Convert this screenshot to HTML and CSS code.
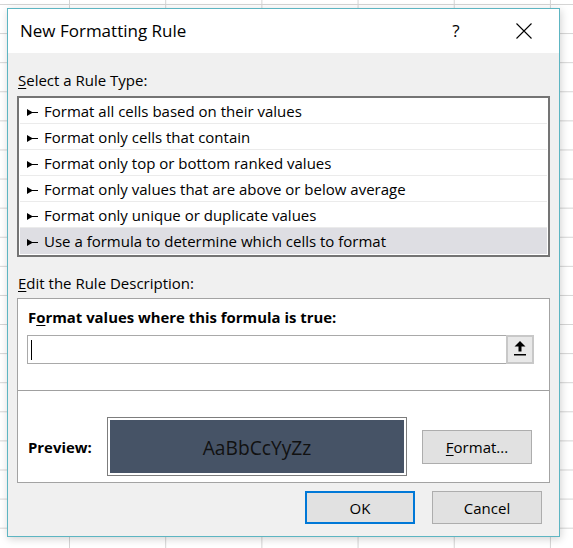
FILE: index.html
```html
<!DOCTYPE html>
<html lang="en">
<head>
<meta charset="utf-8">
<title>New Formatting Rule</title>
<link rel="stylesheet" href="styles.css">
</head>
<body>
<div class="dialog">
  <div class="titlebar">
    <span class="title">New Formatting Rule</span>
    <span class="help">?</span>
    <span class="close">
      <svg width="16" height="16" viewBox="0 0 16 16"><path d="M0.5 0.5 L15.5 15.5 M15.5 0.5 L0.5 15.5" stroke="#000" stroke-width="1.1" fill="none"/></svg>
    </span>
  </div>
  <div class="content">
    <div class="label"><u>S</u>elect a Rule Type:</div>
    <div class="list">
      <div class="row"><svg class="bullet" width="11" height="7" viewBox="0 0 11 7"><path d="M0 0 L6 3.5 L0 7 Z" fill="#000"/><path d="M5 3.5 H11" stroke="#000" stroke-width="1"/></svg><span class="row-text">Format all cells based on their values</span></div>
      <div class="row"><svg class="bullet" width="11" height="7" viewBox="0 0 11 7"><path d="M0 0 L6 3.5 L0 7 Z" fill="#000"/><path d="M5 3.5 H11" stroke="#000" stroke-width="1"/></svg><span class="row-text">Format only cells that contain</span></div>
      <div class="row"><svg class="bullet" width="11" height="7" viewBox="0 0 11 7"><path d="M0 0 L6 3.5 L0 7 Z" fill="#000"/><path d="M5 3.5 H11" stroke="#000" stroke-width="1"/></svg><span class="row-text">Format only top or bottom ranked values</span></div>
      <div class="row"><svg class="bullet" width="11" height="7" viewBox="0 0 11 7"><path d="M0 0 L6 3.5 L0 7 Z" fill="#000"/><path d="M5 3.5 H11" stroke="#000" stroke-width="1"/></svg><span class="row-text">Format only values that are above or below average</span></div>
      <div class="row"><svg class="bullet" width="11" height="7" viewBox="0 0 11 7"><path d="M0 0 L6 3.5 L0 7 Z" fill="#000"/><path d="M5 3.5 H11" stroke="#000" stroke-width="1"/></svg><span class="row-text">Format only unique or duplicate values</span></div>
      <div class="row selected"><svg class="bullet" width="11" height="7" viewBox="0 0 11 7"><path d="M0 0 L6 3.5 L0 7 Z" fill="#000"/><path d="M5 3.5 H11" stroke="#000" stroke-width="1"/></svg><span class="row-text">Use a formula to determine which cells to format</span></div>
    </div>
    <div class="label second"><u>E</u>dit the Rule Description:</div>
    <div class="desc">
      <div class="desc-top">
        <div class="bold-label">F<u>o</u>rmat values where this formula is true:</div>
        <div class="formula">
          <div class="input"><span class="caret"></span></div>
          <div class="refbtn">
            <svg width="24" height="25" viewBox="0 0 24 25"><path d="M12 4 L17.5 9.5 H13.5 V14.5 H10.5 V9.5 H6.5 Z" fill="#000"/><rect x="6" y="17" width="12" height="1.5" fill="#000"/></svg>
          </div>
        </div>
      </div>
      <div class="desc-bottom">
        <div class="preview-label">Preview:</div>
        <div class="preview"><div class="preview-fill">AaBbCcYyZz</div></div>
        <button class="btn format"><u>F</u>ormat...</button>
      </div>
    </div>
    <div class="actions">
      <button class="btn ok">OK</button>
      <button class="btn cancel">Cancel</button>
    </div>
  </div>
</div>
</body>
</html>
```
FILE: styles.css
```css
html, body {
  margin: 0;
  padding: 0;
}

body {
  width: 573px;
  height: 548px;
  overflow: hidden;
  font-family: "Open Sans", "Noto Sans", sans-serif;
  color: #000;
  background-color: #ffffff;
  background-image:
    linear-gradient(to right, #d4d4d4 1px, transparent 1px),
    linear-gradient(to bottom, #d4d4d4 1px, transparent 1px);
  background-size: 96.2px 100%, 100% 29.1px;
  background-position: 69px 0, 0 4px;
}

.dialog {
  margin: 8px 0 0 7px;
  width: 553px;
  box-sizing: border-box;
  border: 1px solid #5db5c2;
  background: #f0f0f0;
  box-shadow: 1px 2px 8px rgba(0, 0, 0, 0.18);
}

.titlebar {
  height: 44px;
  background: #ffffff;
  display: flex;
  align-items: center;
  padding-left: 12px;
}

.title {
  font-size: 17px;
  line-height: 22px;
}

.help {
  margin-left: auto;
  width: 24px;
  padding-left: 2px;
  text-align: center;
  font-size: 17px;
  line-height: 22px;
}

.close {
  width: 46px;
  margin-left: 33px;
  margin-right: 12px;
  display: flex;
  justify-content: center;
}

.close svg {
  display: block;
}

.content {
  padding: 17px 9px 12px 9px;
}

.label {
  font-size: 15px;
  line-height: 20px;
  height: 20px;
  padding-left: 1px;
  white-space: nowrap;
}

.label.second {
  margin-top: 16px;
}

u {
  text-decoration: underline;
  text-decoration-thickness: 1px;
  text-underline-offset: 2px;
}

.list {
  margin-top: 6px;
  border: 2px solid #747474;
  background: #ffffff;
  padding: 0 1px 1px 1px;
}

.row {
  height: 26px;
  box-sizing: border-box;
  padding: 2px 0 0 7px;
  border-bottom: 1px solid #ebebeb;
  display: flex;
  align-items: flex-start;
  font-size: 15px;
  line-height: 23px;
  white-space: nowrap;
}

.row.selected {
  background: #dedee3;
  border-bottom-color: transparent;
}

.bullet {
  display: block;
  margin-top: 8.5px;
  flex: none;
}

.row-text {
  margin-left: 6px;
}

.desc {
  margin-top: 5px;
  border: 1px solid #a3a3a3;
  background: #ffffff;
}

.desc-top {
  padding: 8px 15px 26px 9px;
  border-bottom: 1px solid #a0a0a0;
}

.bold-label {
  font-weight: 700;
  font-size: 14.9px;
  line-height: 20px;
  height: 20px;
  padding-left: 1px;
  white-space: nowrap;
}

.formula {
  margin-top: 8px;
  height: 29px;
  display: flex;
}

.input {
  flex: 1;
  box-sizing: border-box;
  border: 1px solid #a9a9a9;
  border-right: none;
  display: flex;
  align-items: center;
}

.caret {
  width: 1px;
  height: 20px;
  background: #000;
  margin-left: 3px;
}

.refbtn {
  width: 28px;
  box-sizing: border-box;
  border: 2px solid #c8c8c8;
  background: #e8e8e8;
  display: flex;
  align-items: center;
  justify-content: center;
}

.refbtn svg {
  display: block;
}

.desc-bottom {
  height: 91px;
  box-sizing: border-box;
  padding: 26px 0 6px 10px;
  display: flex;
  align-items: center;
}

.preview-label {
  width: 79px;
  font-weight: 700;
  font-size: 14.9px;
  line-height: 20px;
  flex: none;
}

.preview {
  width: 300px;
  height: 59px;
  box-sizing: border-box;
  border: 1px solid #7d7d7d;
  padding: 2px;
  background: #ffffff;
  flex: none;
}

.preview-fill {
  height: 100%;
  background: #465366;
  display: flex;
  align-items: center;
  justify-content: center;
  font-size: 19.2px;
  color: #111111;
  padding-top: 1px;
  box-sizing: border-box;
}

.btn {
  width: 110px;
  height: 33px;
  box-sizing: border-box;
  background: #e1e1e1;
  border: 1px solid #adadad;
  font-family: "Open Sans", "Noto Sans", sans-serif;
  font-size: 15px;
  color: #000;
  padding: 0;
  margin: 0;
}

.btn.format {
  height: 34px;
  margin-left: 15px;
}

.btn.ok {
  border: 2px solid #0078d7;
}

.actions {
  margin-top: 8px;
  display: flex;
  justify-content: flex-end;
  gap: 17px;
  padding-right: 8px;
}
```
